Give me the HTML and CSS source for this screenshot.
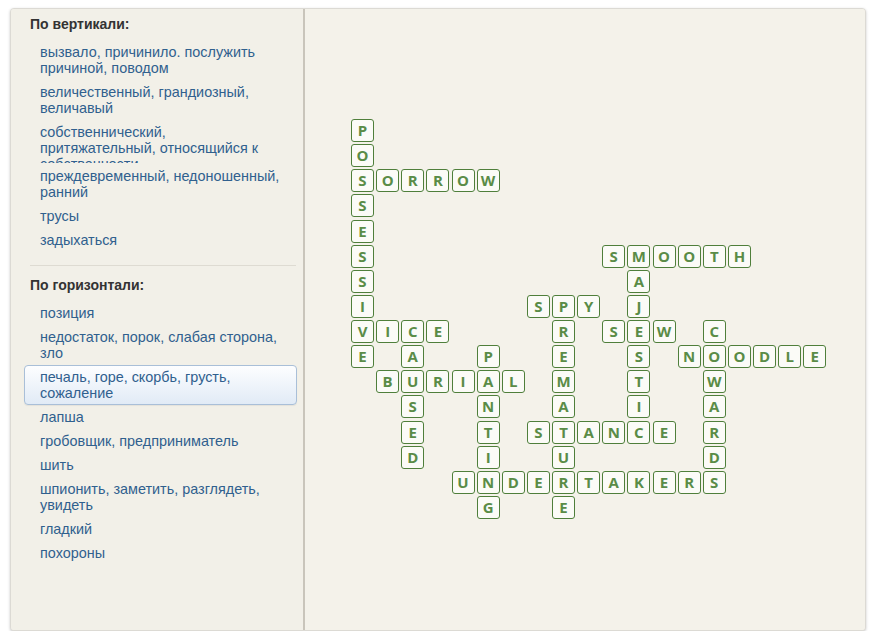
FILE: index.html
```html
<!DOCTYPE html>
<html lang="ru">
<head>
<meta charset="utf-8">
<title>Кроссворд</title>
<link rel="stylesheet" href="styles.css">
</head>
<body>
<div class="panel">
  <aside class="sidebar">
    <section class="section">
      <h2 class="heading">По вертикали:</h2>
      <ul class="clues">
        <li class="clue">вызвало, причинило. послужить причиной, поводом</li>
        <li class="clue">величественный, грандиозный, величавый</li>
        <li class="clue clipped">собственнический, притяжательный, относящийся к собственности</li>
        <li class="clue">преждевременный, недоношенный, ранний</li>
        <li class="clue">трусы</li>
        <li class="clue">задыхаться</li>
      </ul>
    </section>
    <hr class="sep">
    <section class="section">
      <h2 class="heading">По горизонтали:</h2>
      <ul class="clues">
        <li class="clue">позиция</li>
        <li class="clue">недостаток, порок, слабая сторона, зло</li>
        <li class="clue active">печаль, горе, скорбь, грусть, сожаление</li>
        <li class="clue">лапша</li>
        <li class="clue">гробовщик, предприниматель</li>
        <li class="clue">шить</li>
        <li class="clue">шпионить, заметить, разглядеть, увидеть</li>
        <li class="clue">гладкий</li>
        <li class="clue">похороны</li>
      </ul>
    </section>
  </aside>
  <main class="board">
    <div class="grid">
      <div class="cell" style="grid-area:1/1">P</div>
      <div class="cell" style="grid-area:2/1">O</div>
      <div class="cell" style="grid-area:3/1">S</div>
      <div class="cell" style="grid-area:3/2">O</div>
      <div class="cell" style="grid-area:3/3">R</div>
      <div class="cell" style="grid-area:3/4">R</div>
      <div class="cell" style="grid-area:3/5">O</div>
      <div class="cell" style="grid-area:3/6">W</div>
      <div class="cell" style="grid-area:4/1">S</div>
      <div class="cell" style="grid-area:5/1">E</div>
      <div class="cell" style="grid-area:6/1">S</div>
      <div class="cell" style="grid-area:6/11">S</div>
      <div class="cell" style="grid-area:6/12">M</div>
      <div class="cell" style="grid-area:6/13">O</div>
      <div class="cell" style="grid-area:6/14">O</div>
      <div class="cell" style="grid-area:6/15">T</div>
      <div class="cell" style="grid-area:6/16">H</div>
      <div class="cell" style="grid-area:7/1">S</div>
      <div class="cell" style="grid-area:7/12">A</div>
      <div class="cell" style="grid-area:8/1">I</div>
      <div class="cell" style="grid-area:8/8">S</div>
      <div class="cell" style="grid-area:8/9">P</div>
      <div class="cell" style="grid-area:8/10">Y</div>
      <div class="cell" style="grid-area:8/12">J</div>
      <div class="cell" style="grid-area:9/1">V</div>
      <div class="cell" style="grid-area:9/2">I</div>
      <div class="cell" style="grid-area:9/3">C</div>
      <div class="cell" style="grid-area:9/4">E</div>
      <div class="cell" style="grid-area:9/9">R</div>
      <div class="cell" style="grid-area:9/11">S</div>
      <div class="cell" style="grid-area:9/12">E</div>
      <div class="cell" style="grid-area:9/13">W</div>
      <div class="cell" style="grid-area:9/15">C</div>
      <div class="cell" style="grid-area:10/1">E</div>
      <div class="cell" style="grid-area:10/3">A</div>
      <div class="cell" style="grid-area:10/6">P</div>
      <div class="cell" style="grid-area:10/9">E</div>
      <div class="cell" style="grid-area:10/12">S</div>
      <div class="cell" style="grid-area:10/14">N</div>
      <div class="cell" style="grid-area:10/15">O</div>
      <div class="cell" style="grid-area:10/16">O</div>
      <div class="cell" style="grid-area:10/17">D</div>
      <div class="cell" style="grid-area:10/18">L</div>
      <div class="cell" style="grid-area:10/19">E</div>
      <div class="cell" style="grid-area:11/2">B</div>
      <div class="cell" style="grid-area:11/3">U</div>
      <div class="cell" style="grid-area:11/4">R</div>
      <div class="cell" style="grid-area:11/5">I</div>
      <div class="cell" style="grid-area:11/6">A</div>
      <div class="cell" style="grid-area:11/7">L</div>
      <div class="cell" style="grid-area:11/9">M</div>
      <div class="cell" style="grid-area:11/12">T</div>
      <div class="cell" style="grid-area:11/15">W</div>
      <div class="cell" style="grid-area:12/3">S</div>
      <div class="cell" style="grid-area:12/6">N</div>
      <div class="cell" style="grid-area:12/9">A</div>
      <div class="cell" style="grid-area:12/12">I</div>
      <div class="cell" style="grid-area:12/15">A</div>
      <div class="cell" style="grid-area:13/3">E</div>
      <div class="cell" style="grid-area:13/6">T</div>
      <div class="cell" style="grid-area:13/8">S</div>
      <div class="cell" style="grid-area:13/9">T</div>
      <div class="cell" style="grid-area:13/10">A</div>
      <div class="cell" style="grid-area:13/11">N</div>
      <div class="cell" style="grid-area:13/12">C</div>
      <div class="cell" style="grid-area:13/13">E</div>
      <div class="cell" style="grid-area:13/15">R</div>
      <div class="cell" style="grid-area:14/3">D</div>
      <div class="cell" style="grid-area:14/6">I</div>
      <div class="cell" style="grid-area:14/9">U</div>
      <div class="cell" style="grid-area:14/15">D</div>
      <div class="cell" style="grid-area:15/5">U</div>
      <div class="cell" style="grid-area:15/6">N</div>
      <div class="cell" style="grid-area:15/7">D</div>
      <div class="cell" style="grid-area:15/8">E</div>
      <div class="cell" style="grid-area:15/9">R</div>
      <div class="cell" style="grid-area:15/10">T</div>
      <div class="cell" style="grid-area:15/11">A</div>
      <div class="cell" style="grid-area:15/12">K</div>
      <div class="cell" style="grid-area:15/13">E</div>
      <div class="cell" style="grid-area:15/14">R</div>
      <div class="cell" style="grid-area:15/15">S</div>
      <div class="cell" style="grid-area:16/6">G</div>
      <div class="cell" style="grid-area:16/9">E</div>
    </div>
  </main>
</div>
</body>
</html>
```
FILE: styles.css
```css
html, body {
  margin: 0;
  padding: 0;
  background: #ffffff;
}

body {
  font-family: "Liberation Sans", Arial, sans-serif;
}

.panel {
  box-sizing: border-box;
  margin: 8px 0 0 10px;
  width: 856px;
  height: 623px;
  display: flex;
  border: 1px solid #dcdad4;
  border-radius: 4px;
  box-shadow: 0 1px 3px rgba(0, 0, 0, 0.22);
  background: #f4f2eb;
  overflow: hidden;
}

.sidebar {
  box-sizing: border-box;
  width: 294px;
  flex: none;
  padding: 5px 6px 0 13px;
  background: #f2f0e8;
  border-right: 2px solid #c9c5bb;
}

.section {
  margin: 0;
}

.heading {
  margin: 0 0 6px 6px;
  font-size: 14px;
  line-height: 20px;
  font-weight: bold;
  color: #333333;
}

.clues {
  list-style: none;
  margin: 0;
  padding: 0;
}

.clue {
  border: 1px solid transparent;
  border-radius: 4px;
  padding: 3px 15px 3px 15px;
  font-size: 14.4px;
  line-height: 16px;
  color: #30608e;
}

.clue.clipped {
  max-height: 36px;
  overflow: hidden;
}

.clue.active {
  border-color: #a9bfd8;
  background: linear-gradient(#fdfeff, #e1ebf6);
  box-shadow: 0 1px 1px rgba(0, 0, 0, 0.06);
}

.sep {
  margin: 13px 1px 9px 6px;
  border: 0;
  border-top: 1px solid #dedbd2;
  height: 0;
}

.board {
  flex: 1;
  box-sizing: border-box;
  padding: 110px 0 0 46px;
  background: #f4f2ea;
}

.grid {
  display: grid;
  grid-template-columns: repeat(19, 23px);
  grid-template-rows: repeat(16, 23px);
  gap: 2.13px;
}

.cell {
  box-sizing: border-box;
  width: 23px;
  height: 23px;
  border: 1px solid #4f7f3b;
  border-radius: 3px;
  background: #fbfbf7;
  color: #5a8c47;
  font-family: "Open Sans", "DejaVu Sans", sans-serif;
  font-weight: bold;
  font-size: 15px;
  line-height: 21px;
  text-align: center;
}
```
